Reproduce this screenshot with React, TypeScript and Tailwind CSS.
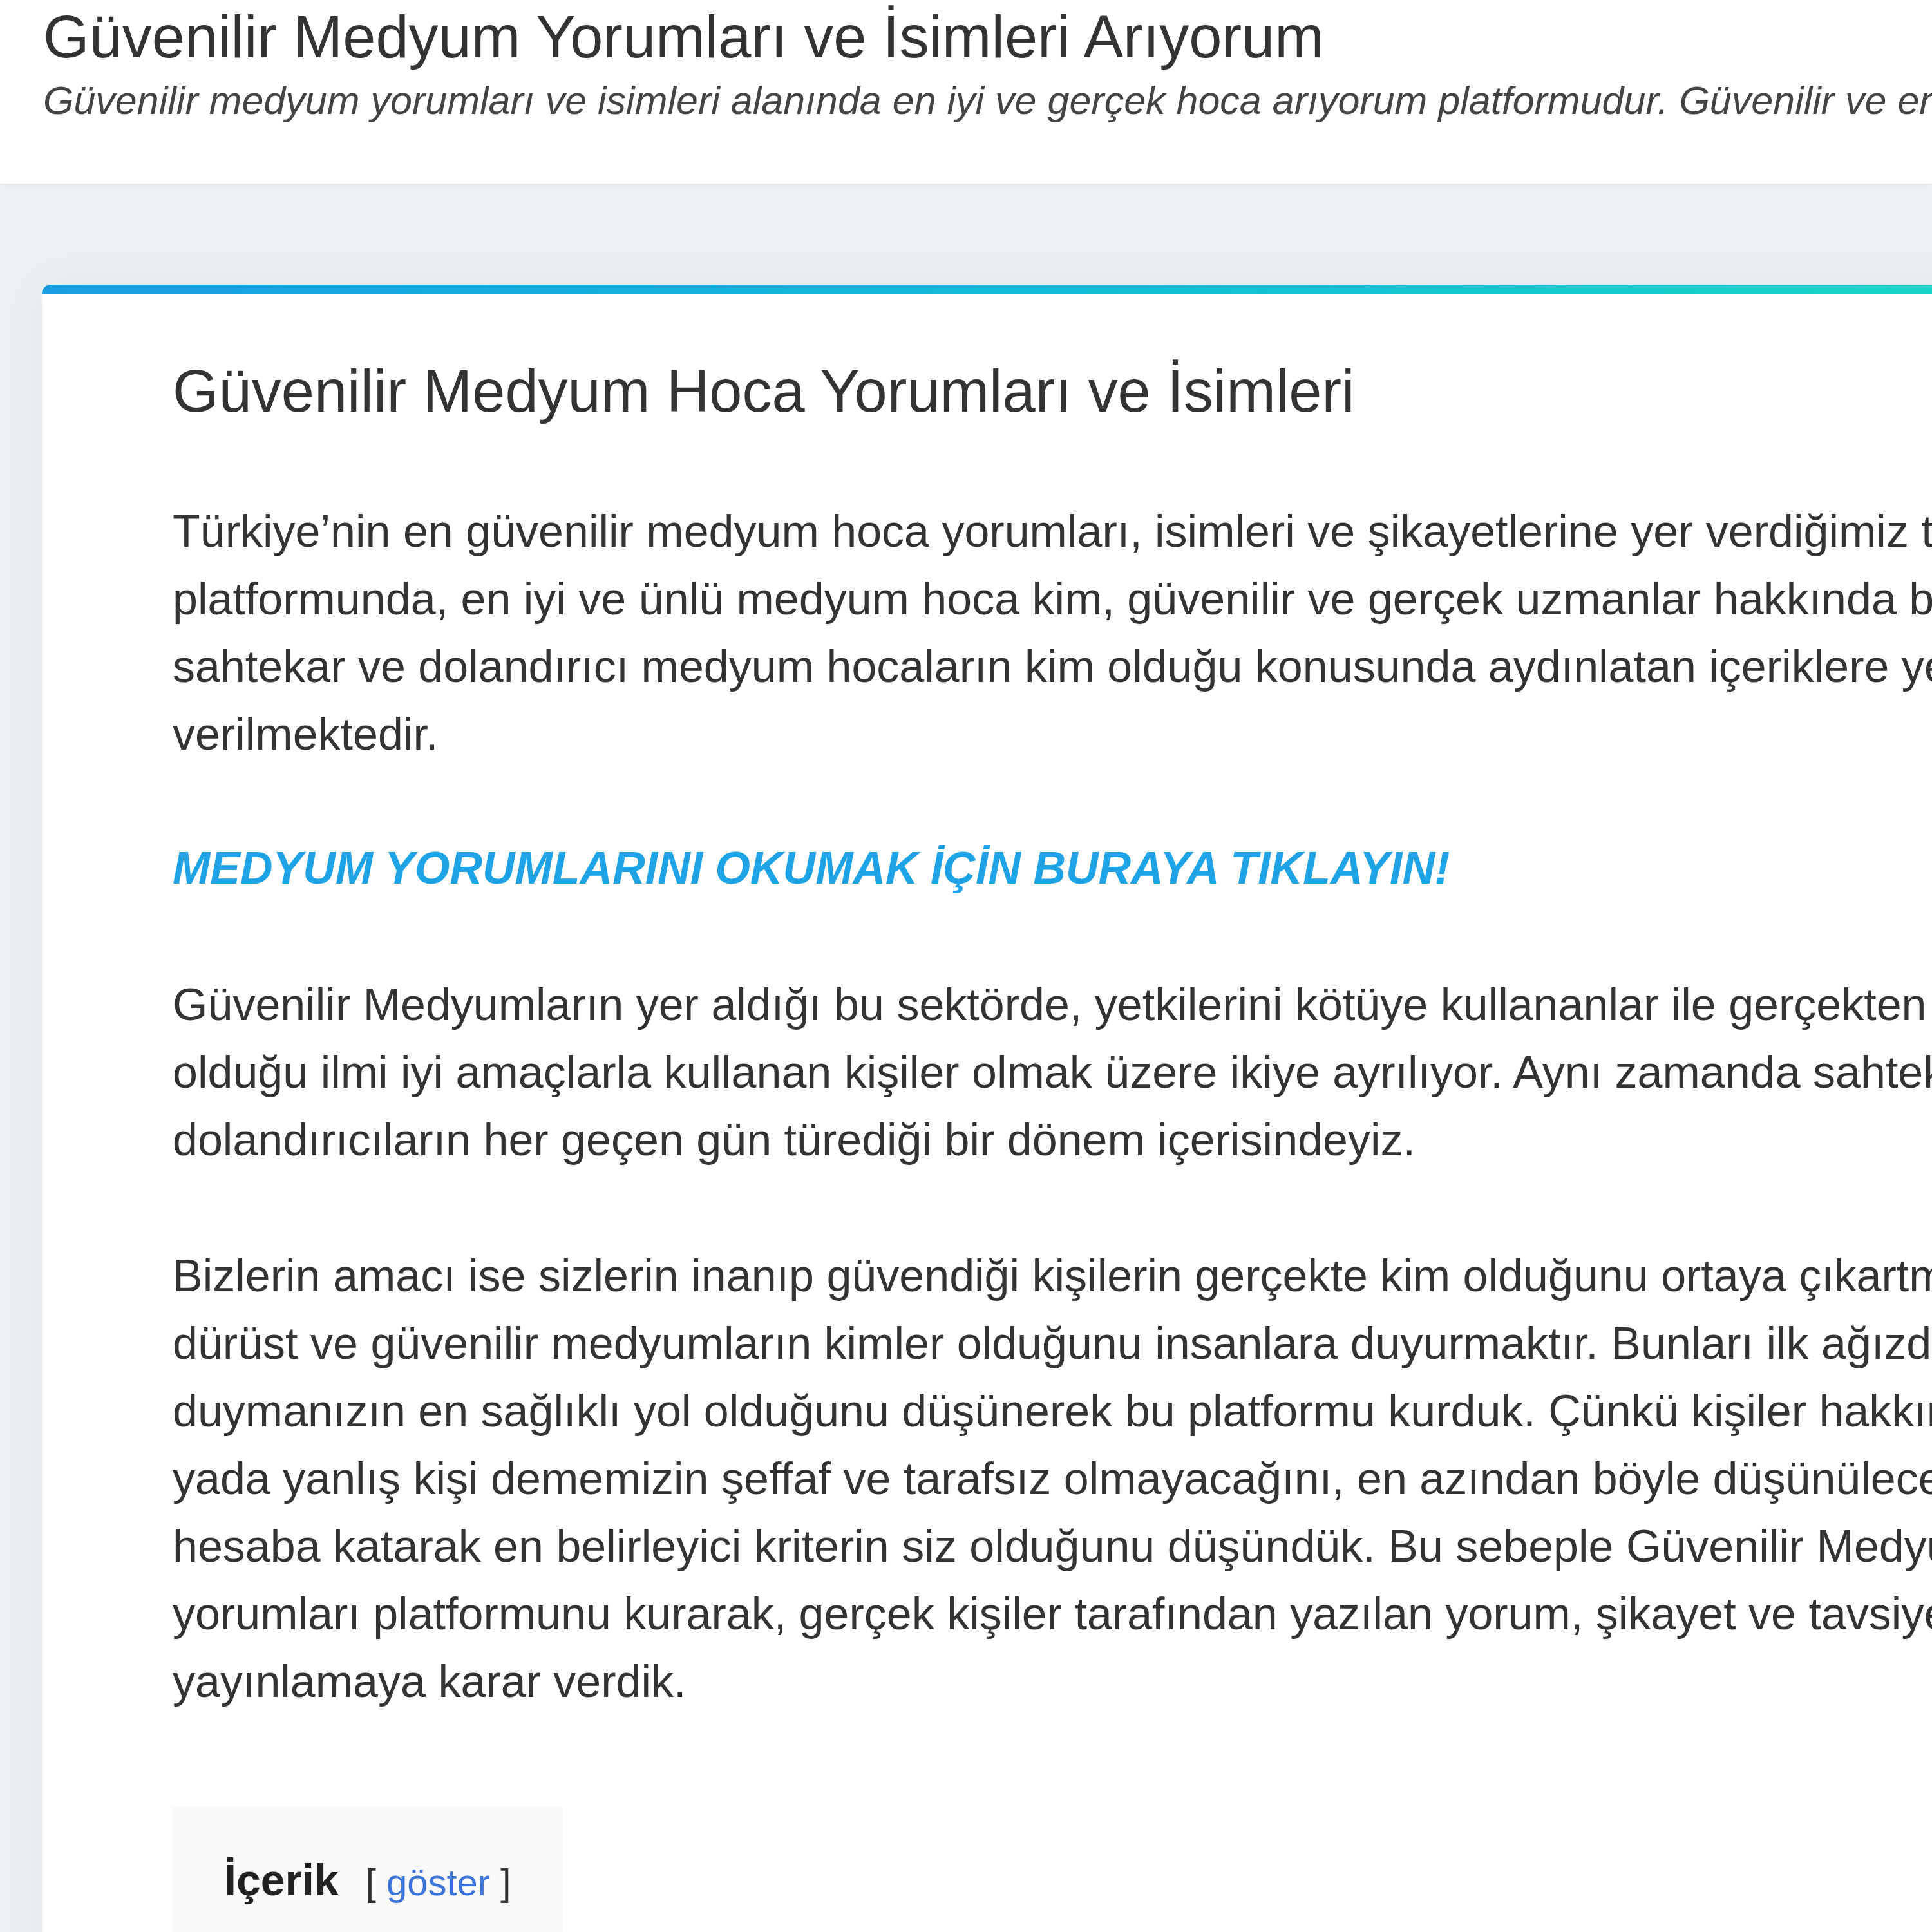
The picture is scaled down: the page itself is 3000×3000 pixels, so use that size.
const intro = [
  "Türkiye’nin en güvenilir medyum hoca yorumları, isimleri ve şikayetlerine yer verdiğimiz tavsiye",
  "platformunda, en iyi ve ünlü medyum hoca kim, güvenilir ve gerçek uzmanlar hakkında bilgi veren,",
  "sahtekar ve dolandırıcı medyum hocaların kim olduğu konusunda aydınlatan içeriklere yer",
  "verilmektedir.",
];

const sector = [
  "Güvenilir Medyumların yer aldığı bu sektörde, yetkilerini kötüye kullananlar ile gerçekten sahip",
  "olduğu ilmi iyi amaçlarla kullanan kişiler olmak üzere ikiye ayrılıyor. Aynı zamanda sahtekar ve",
  "dolandırıcıların her geçen gün türediği bir dönem içerisindeyiz.",
];

const purpose = [
  "Bizlerin amacı ise sizlerin inanıp güvendiği kişilerin gerçekte kim olduğunu ortaya çıkartmak ve",
  "dürüst ve güvenilir medyumların kimler olduğunu insanlara duyurmaktır. Bunları ilk ağızdan",
  "duymanızın en sağlıklı yol olduğunu düşünerek bu platformu kurduk. Çünkü kişiler hakkında doğru",
  "yada yanlış kişi dememizin şeffaf ve tarafsız olmayacağını, en azından böyle düşünüleceğini",
  "hesaba katarak en belirleyici kriterin siz olduğunu düşündük. Bu sebeple Güvenilir Medyum hoca",
  "yorumları platformunu kurarak, gerçek kişiler tarafından yazılan yorum, şikayet ve tavsiyeleri",
  "yayınlamaya karar verdik.",
];

function Paragraph({ lines, className = "" }: { lines: string[]; className?: string }) {
  return (
    <p className={`text-[70px] leading-[105px] text-[#333] whitespace-nowrap ${className}`}>
      {lines.map((line, i) => (
        <span key={i}>
          {line}
          {i < lines.length - 1 && <br />}
        </span>
      ))}
    </p>
  );
}

export default function App() {
  return (
    <div className="w-[3000px] h-[3000px] overflow-hidden bg-[#ecf0f3] font-['Liberation_Sans',Arial,sans-serif]">
      <header className="relative z-10 h-[285px] bg-white pt-[3px] pl-[67px] shadow-[0_2px_8px_rgba(0,0,0,0.04)]">
        <h1 className="text-[92px] leading-[109px] text-[#333] whitespace-nowrap">
          Güvenilir Medyum Yorumları ve İsimleri Arıyorum
        </h1>
        <p className="mt-[2px] text-[61px] leading-[85px] italic text-[#444] whitespace-nowrap">
          Güvenilir medyum yorumları ve isimleri alanında en iyi ve gerçek hoca arıyorum platformudur. Güvenilir ve en iyi medyum hocaları burada bulabilirsiniz.
        </p>
      </header>

      <main className="pt-[157px] pl-[65px]">
        <article className="w-[3200px] rounded-tl-[14px] overflow-hidden bg-white shadow-[0_0_70px_rgba(40,60,80,0.06)]">
          <div className="h-[14px] bg-gradient-to-r from-[#1a9ee3] to-[#1adac4]" />

          <div className="pl-[203px] pt-[97px]">
            <h2 className="text-[92px] leading-[109px] text-[#333] whitespace-nowrap">
              Güvenilir Medyum Hoca Yorumları ve İsimleri
            </h2>

            <Paragraph lines={intro} className="mt-[111px]" />

            <p className="mt-[103px] text-[70px] leading-[105px] font-bold italic text-[#1ea3e6] whitespace-nowrap">
              <a href="#">MEDYUM YORUMLARINI OKUMAK İÇİN BURAYA TIKLAYIN!</a>
            </p>

            <Paragraph lines={sector} className="mt-[107px]" />
            <Paragraph lines={purpose} className="mt-[106px]" />

            <div className="mt-[142px] inline-block bg-[#f9f9f9] px-[80px] pt-[61px] pb-[60px]">
              <div className="text-[68px] leading-[105px] text-[#222] whitespace-nowrap">
                <span className="font-bold">İçerik</span>
                <span className="ml-[42px] text-[58px] text-[#333]">
                  [ <a href="#" className="text-[#3a72d8]">göster</a> ]
                </span>
              </div>
            </div>
          </div>
        </article>
      </main>
    </div>
  );
}
